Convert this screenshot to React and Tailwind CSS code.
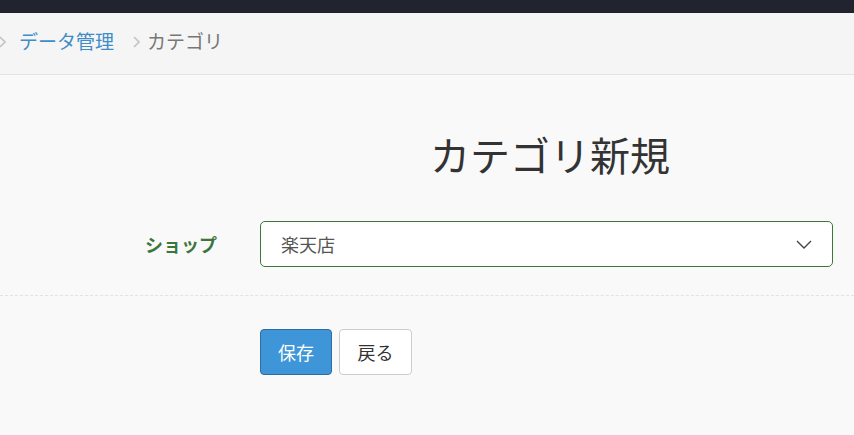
import React from 'react'

const font = { fontFamily: '"Noto Sans CJK JP", "Noto Sans", sans-serif' }

function Chevron() {
  return (
    <svg width="16" height="9" viewBox="0 0 16 9" fill="none">
      <path d="M1 1l7 7 7-7" stroke="#444" strokeWidth="1.4" />
    </svg>
  )
}

function Sep() {
  return (
    <svg width="7" height="12" viewBox="0 0 7 12" fill="none">
      <path d="M1 1l5 5-5 5" stroke="#c4c4c4" strokeWidth="1.6" />
    </svg>
  )
}

export default function App() {
  return (
    <div className="w-[854px] h-[435px] overflow-hidden bg-[#f9f9f9] text-[#333]" style={font}>
      <div className="h-[13px] bg-[#21232f]" />

      {/* Breadcrumb */}
      <div className="h-[62px] bg-[#f5f5f5] border-b border-[#e3e3e3] flex items-center text-[19px] pb-[4px]">
        <span className="ml-[-1px] mr-[13px] flex"><Sep /></span>
        <span className="text-[#3f8dc8]">データ管理</span>
        <span className="ml-[19px] mr-[7px] flex"><Sep /></span>
        <span className="text-[#777]">カテゴリ</span>
      </div>

      {/* Title */}
      <div className="grid grid-cols-[260px_580px] pt-[50px]">
        <div />
        <h1 className="text-center text-[40px] leading-[58px] text-[#333]">カテゴリ新規</h1>
      </div>

      {/* Shop field */}
      <div className="grid grid-cols-[217px_573px] gap-x-[43px] items-center mt-[38px]">
        <label className="text-right text-[18px] font-bold text-[#3c763d]">ショップ</label>
        <div className="h-[46px] bg-white border border-[#3c763d] rounded-[5px] flex items-center justify-between pl-[20px] pr-[20px] text-[18px] text-[#555]">
          <span>楽天店</span>
          <Chevron />
        </div>
      </div>

      <div className="mt-[28px] border-t border-dashed border-[#e3e3e3]" />

      {/* Buttons */}
      <div className="flex gap-[7px] pl-[260px] mt-[33px]">
        <button className="w-[72px] h-[46px] rounded-[4px] bg-[#3e96d8] border border-[#2e6da4] text-white text-[18px]">保存</button>
        <button className="w-[73px] h-[46px] rounded-[4px] bg-white border border-[#ccc] text-[#333] text-[18px]">戻る</button>
      </div>
    </div>
  )
}
